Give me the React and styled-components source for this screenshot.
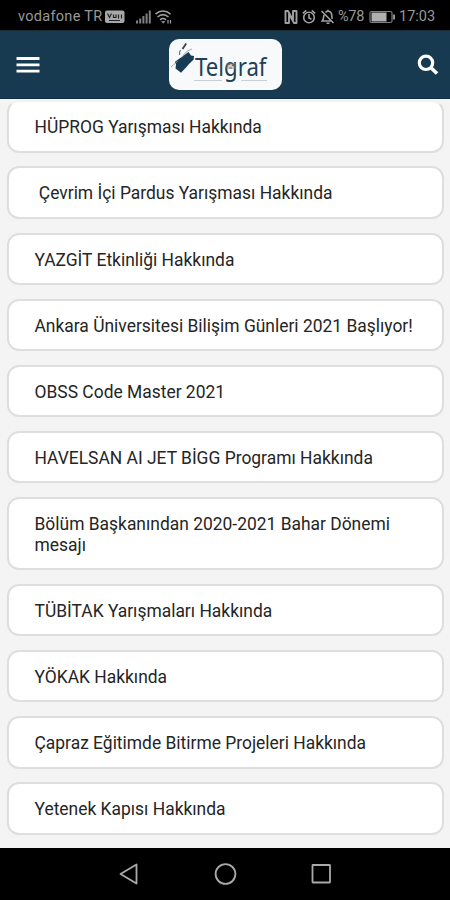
import styled, { createGlobalStyle } from "styled-components";


const announcements = [
  "HÜPROG Yarışması Hakkında",
  "\u00a0Çevrim İçi Pardus Yarışması Hakkında",
  "YAZGİT Etkinliği Hakkında",
  "Ankara Üniversitesi Bilişim Günleri 2021 Başlıyor!",
  "OBSS Code Master 2021",
  "HAVELSAN AI JET BİGG Programı Hakkında",
  "Bölüm Başkanından 2020-2021 Bahar Dönemi mesajı",
  "TÜBİTAK Yarışmaları Hakkında",
  "YÖKAK Hakkında",
  "Çapraz Eğitimde Bitirme Projeleri Hakkında",
  "Yetenek Kapısı Hakkında",
];

function StatusBar() {
  return (
    <StatusContainer>
      <Carrier>vodafone TR</Carrier>
      <svg width="70" height="20" viewBox="0 0 70 20">
        {/* VoWiFi */}
        <rect x="2" y="3.500" width="19.500" height="12.500" rx="2" fill="#a8a8a8" />
        <path d="M4.500 6.500l2 4 2-4M10.500 7.500v3h2.500v-3M15.500 7.500v4M18.500 7.500v4M6 13.500h11" fill="none" stroke="#222" strokeWidth="1.200" />
        {/* signal */}
        <path d="M34 16.500v-3M37.200 16.500v-5M40.400 16.500V9M43.600 16.500v-10M46.800 16.500v-13" stroke="#808080" strokeWidth="2" />
        {/* wifi */}
        <g fill="none" stroke="#a0a0a0" strokeWidth="1.500">
          <path d="M52.500 7.100c4.500-4 10.500-4 15 0M54.500 10c3.500-3 7.500-3 11 0M57 12.800c2-1.600 4-1.600 6 0" />
          <path d="M58.500 14.500l1.700 1.800 1.700-1.800z" fill="#a0a0a0" strokeWidth=".5" />
          <path d="M65 16.500V13M67.500 13v3.500" strokeWidth="1.200" />
        </g>
      </svg>
      <StatusRight>
        <svg width="54" height="20" viewBox="0 0 54 20">
          <path d="M1.500 16V4H4l5 9V4h3.500v12H10L5 7v9z" fill="none" stroke="#a0a0a0" strokeWidth="1.900" strokeLinejoin="round" />
          <g fill="none" stroke="#a0a0a0" strokeWidth="1.600">
            <circle cx="25" cy="10.500" r="5.300" />
            <path d="M25 7v4l2.500 1.200M18.800 6.300l3.500-3M31.200 6.300l-3.500-3" />
            <path d="M37.500 4l12 12M40 8c-.6 2.500-.3 4-1.800 6h8.500M41.500 5.500c1-1 1.500-1.200 2.500-1.200 3 0 3.800 2.500 3.800 4.700 0 1.200.2 2 .6 2.800M44 4.300V2.700M42.500 16.200h3" />
          </g>
        </svg>
        <Percent>%78</Percent>
        <svg width="27" height="20" viewBox="0 0 27 20">
          <rect x="1" y="4.500" width="22" height="11" rx="1.500" fill="none" stroke="#808080" strokeWidth="1.200" />
          <rect x="2.500" y="5.500" width="15" height="9" fill="#b0b0b0" />
          <path d="M25 7.500v5" stroke="#909090" strokeWidth="2" />
        </svg>
        <Clock>17:03</Clock>
      </StatusRight>
    </StatusContainer>
  );
}

function Logo() {
  return (
    <LogoBox>
      <svg width="113" height="51" viewBox="0 0 113 51">
        <path d="M19.500 13l2.500 3.500 3 .5-.3 3.500L20 25l-3 3.500-5 5.200-2.500-2-3-2.200L7 25.500l-1-2.800z" fill="#183c53" />
        <path d="M2 28l7-6M13 18.500c2-4.500 5.500-7 10-8.500" fill="none" stroke="#8a989f" strokeWidth=".8" />
        <path d="M17.200 4.500L13.500 10" fill="none" stroke="#34434c" strokeWidth="1.800" />
        <path d="M11.500 11c-1.200 1.800-1.300 3.300-1 5" fill="none" stroke="#65737b" strokeWidth="1.200" />
        <LogoText x="26" y="37" textLength="71.500" lengthAdjust="spacingAndGlyphs">Telgraf</LogoText>
        <path d="M57.500 24h9v6h-9z" fill="#9b9189" opacity=".45" />
        <path d="M59 25.500h2M63 26.500h2M60 29h3" stroke="#7c6653" strokeWidth="1" />
        <path d="M25 41.500h28M72 41.500h26" stroke="#c8ced1" strokeWidth="1" />
      </svg>
    </LogoBox>
  );
}

function App() {
  return (
    <Screen>
      <GlobalStyle />
      <StatusBar />
      <Header>
        <IconButton aria-label="Menü">
          <svg width="24" height="20" viewBox="0 0 24 20">
            <path d="M.5 3.500h23M.5 9.800h23M.5 16.200h23" stroke="#fff" strokeWidth="2.800" />
          </svg>
        </IconButton>
        <Logo />
        <IconButton $end aria-label="Ara">
          <svg width="22" height="22" viewBox="0 0 22 22">
            <circle cx="9" cy="8.800" r="6.700" fill="none" stroke="#fff" strokeWidth="3.200" />
            <path d="M13.700 13.500l6.300 6" stroke="#fff" strokeWidth="3.600" />
          </svg>
        </IconButton>
      </Header>
      <List>
        {announcements.map((title) => (
          <Card key={title}>{title}</Card>
        ))}
      </List>
      <NavBar>
        <svg width="22" height="24" viewBox="0 0 22 24">
          <path d="M18.500 2.500v19L2.500 12z" fill="none" stroke="#aaa" strokeWidth="1.800" strokeLinejoin="round" />
        </svg>
        <svg width="24" height="24" viewBox="0 0 24 24">
          <circle cx="12.500" cy="12" r="9.900" fill="none" stroke="#aaa" strokeWidth="1.800" />
        </svg>
        <svg width="22" height="24" viewBox="0 0 22 24">
          <rect x="2.500" y="3" width="17.500" height="17.500" rx=".5" fill="none" stroke="#aaa" strokeWidth="1.800" />
        </svg>
      </NavBar>
    </Screen>
  );
}


const GlobalStyle = createGlobalStyle`
  * {
    box-sizing: border-box;
  }

  body {
    margin: 0;
    font-family: Roboto, "Noto Sans", sans-serif;
  }

  svg {
    display: block;
    flex-shrink: 0;
  }
`;

const Screen = styled.div`
  display: flex;
  flex-direction: column;
  width: 450px;
  height: 900px;
  overflow: hidden;
  background: #f4f4f4;
`;

const StatusContainer = styled.div`
  display: flex;
  align-items: center;
  height: 30px;
  flex-shrink: 0;
  padding: 3px 12px 0 18px;
  background: #000;
  color: #989898;
  font-size: 14.5px;
  line-height: 20px;
  white-space: nowrap;
`;

const Carrier = styled.span`
  width: 85px;
  letter-spacing: 0.3px;
`;

const StatusRight = styled.div`
  display: flex;
  align-items: center;
  margin-left: auto;
`;

const Percent = styled.span`
  width: 31px;
  font-size: 14.5px;
  letter-spacing: -0.3px;
`;

const Clock = styled.span`
  width: 39px;
  margin-left: 3px;
`;

const Header = styled.header`
  display: grid;
  grid-template-columns: 1fr auto 1fr;
  align-items: center;
  height: 69px;
  flex-shrink: 0;
  padding: 0 11px 0 16px;
  border-top: 1px solid #172b37;
  border-bottom: 1px solid #0e2d41;
  background: #173a50;
`;

const IconButton = styled.button`
  display: flex;
  justify-self: ${({ $end }) => ($end ? "end" : "start")};
  padding: 0;
  border: 0;
  background: none;
`;

const LogoBox = styled.div`
  width: 113px;
  height: 51px;
  margin-right: 5px;
  border-radius: 10px;
  background: #f8f9fa;
`;

const LogoText = styled.text`
  fill: #213f55;
  font-family: "Noto Sans", sans-serif;
  font-size: 25px;
`;

const List = styled.main`
  display: flex;
  flex-direction: column;
  gap: 13.65px;
  flex: 1;
  min-height: 0;
  padding: 1.3px 6.5px 0 7px;
`;

const Card = styled.article`
  flex-shrink: 0;
  padding: 15px 25px 12.9px 25.5px;
  border: 2px solid #dedede;
  border-radius: 12px;
  background: #fff;
  color: #252525;
  font-size: 17.43px;
  line-height: 20.6px;

  &:first-child {
    border-top-color: #f2f2f2;
  }
`;

const NavBar = styled.nav`
  display: flex;
  align-items: center;
  justify-content: center;
  gap: 73px;
  height: 52px;
  flex-shrink: 0;
  background: #000;
`;


export default App;
